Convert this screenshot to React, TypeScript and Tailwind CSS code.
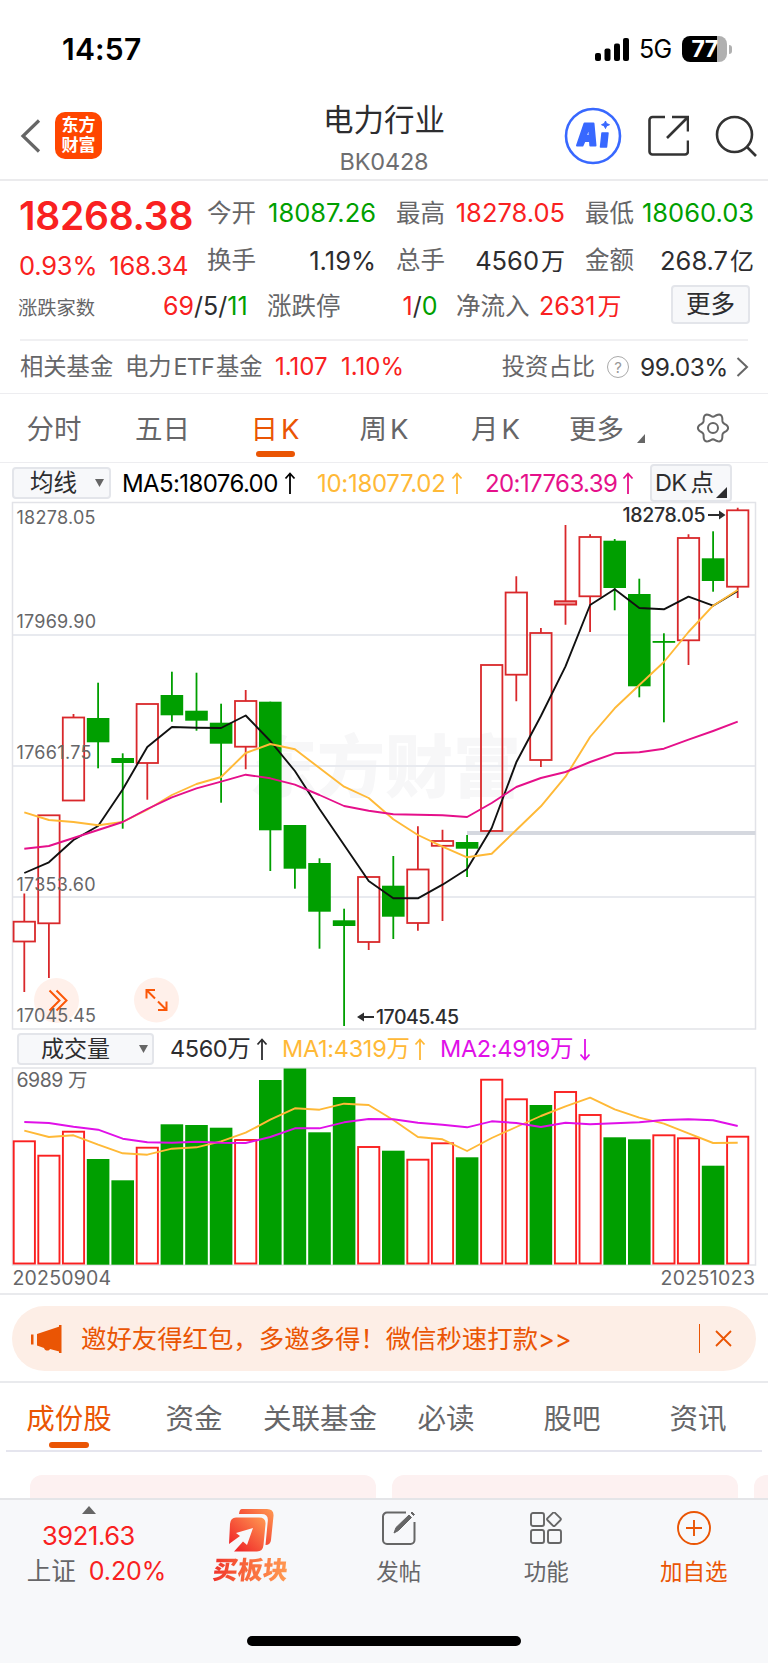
import type { ReactNode } from "react";

type Candle = {
    up: boolean;
    top: number;
    bottom: number;
    high: number;
    low: number;
    vol: number; // y of the volume bar top
};

const RED = "#d9282b";
const GREEN = "#009f00";
const FIRST_X = 24.3;
const STEP = 24.6;

const c = (up: boolean, top: number, bottom: number, high: number, low: number, vol: number): Candle => ({
    up, top, bottom, high, low, vol,
});

const candles: Candle[] = [
    c(true, 921.7, 941.5, 893.5, 992, 1141.3),
    c(true, 815.3, 923.3, 815, 978, 1155.7),
    c(true, 717.5, 800.5, 714, 800, 1131.7),
    c(false, 718, 742.3, 682.7, 768.3, 1159),
    c(false, 758, 763, 753.3, 828.7, 1180.3),
    c(true, 704, 763, 704, 799.7, 1147.7),
    c(false, 695, 715.3, 671.7, 721.7, 1124.3),
    c(false, 710.7, 720.7, 672.7, 730.7, 1125),
    c(false, 722.7, 743.7, 703.7, 802.7, 1127.7),
    c(true, 701, 746.7, 690, 769.3, 1140),
    c(false, 701.7, 830.3, 701.7, 871, 1080),
    c(false, 825, 868.7, 825, 888.7, 1068.5),
    c(false, 863, 911.7, 858.3, 948.7, 1132.3),
    c(false, 920.3, 926, 908.7, 1026, 1097),
    c(true, 877, 942, 877, 950, 1147),
    c(false, 885.7, 916.7, 856, 939, 1150.7),
    c(true, 869.5, 923, 826.3, 930.7, 1159.7),
    c(true, 841, 845.8, 829.7, 921, 1143.3),
    c(false, 842, 848.7, 835, 877, 1157.3),
    c(true, 665, 831, 665, 831, 1079.7),
    c(true, 592.5, 674.7, 576.3, 701.3, 1099.3),
    c(true, 633, 760, 628, 767, 1105),
    c(true, 601.2, 604.6, 525, 624.7, 1092),
    c(true, 537, 596.3, 534.3, 632, 1115),
    c(false, 540.7, 588, 539, 610.3, 1137.3),
    c(false, 594, 686.3, 578.7, 697.3, 1139.3),
    c(false, 641, 642.8, 633.3, 722.3, 1135.3),
    c(true, 538, 640.3, 534.3, 665, 1138.3),
    c(false, 558.3, 581, 531.3, 591.7, 1165.7),
    c(true, 510.3, 586.7, 507.7, 598, 1136.7),
];

// volume colour differs from the candle colour on these days
const volumeFlip = [21, 26];

const ma5 = [873, 862.3, 840, 826, 789.5, 747, 727, 727.7, 728, 715.5, 741, 771, 809, 845, 881, 898.3, 898.3, 884.7, 869, 828, 762.3, 716, 666.3, 605, 589.3, 608, 609.3, 596.7, 605.7, 591];
const ma10 = [812.3, 820, 822, 825.3, 822, 809.7, 795, 784, 777, 753, 744, 749.3, 768, 786.7, 798, 819.3, 835, 846.7, 857.3, 853.7, 830, 806.3, 776.7, 737, 708.3, 685, 662, 632, 605.7, 590];
const ma20 = [848.7, 846, 838, 830, 822, 809, 797.3, 788.3, 781.7, 774.7, 778.3, 784.7, 795, 806, 810.7, 814.3, 814.7, 815.3, 817, 803, 787, 778, 772, 762, 753.3, 752.3, 748.7, 739.7, 731, 721.7];
const volMa1 = [1130.7, 1137, 1135.3, 1144.7, 1153.3, 1154.7, 1148.7, 1147.3, 1141.3, 1132.7, 1119.7, 1108.3, 1109.7, 1103.7, 1105, 1120, 1137, 1139.3, 1151, 1138, 1127, 1116, 1106.3, 1097.7, 1109.3, 1117.7, 1123.7, 1133.3, 1143, 1142.7];
const volMa2 = [1122, 1123, 1126.7, 1129.7, 1138.7, 1142.3, 1142.7, 1141.7, 1142.7, 1143, 1137, 1128.3, 1128.3, 1122.3, 1119, 1119.3, 1122.7, 1124.7, 1127.3, 1121.3, 1123, 1127, 1122.7, 1124.3, 1123.3, 1122.3, 1120, 1119.3, 1120.3, 1126];

const xAt = (i: number) => FIRST_X + i * STEP;
const toPoints = (ys: number[]) => ys.map((y, i) => `${xAt(i).toFixed(1)},${y}`).join(" ");

const gearPath =
    Array.from({ length: 72 }, (_, i) => {
        const a = (i * Math.PI) / 36;
        const r = 13.2 + 1.9 * Math.cos(6 * a);
        return `${i ? "L" : "M"}${(17 + r * Math.cos(a)).toFixed(2)} ${(17 + r * Math.sin(a)).toFixed(2)}`;
    }).join("") + "Z";

export default function App() {
    return (
        <div className="flex h-[1663px] w-[768px] flex-col overflow-hidden bg-white font-['Inter','Noto_Sans_CJK_SC',sans-serif] text-[#2d2d2f]">
            <StatusBar />
            <Header />
            <Quote />
            <PeriodTabs />
            <PriceHeader />
            <PriceChart />
            <VolumeHeader />
            <VolumeChart />
            <Banner />
            <ContentTabs />
            <BottomNav />
        </div>
    );
}

function StatusBar() {
    return (
        <div className="flex h-[92px] shrink-0 items-center justify-between pt-[6px] pr-[36px] pl-[62px] text-black">
            <div className="text-[30px] leading-none font-semibold tracking-[0.2px]">14:57</div>
            <div className="flex items-center">
                <svg width="35" height="23" viewBox="0 0 35 23">
                    <rect x="0" y="15" width="6" height="8" rx="2" />
                    <rect x="9.5" y="10.5" width="6" height="12.5" rx="2" />
                    <rect x="19" y="5.5" width="6" height="17.5" rx="2" />
                    <rect x="28" y="0" width="6" height="23" rx="2" />
                </svg>
                <div className="ml-[9px] w-[34px] text-[25px] leading-none tracking-[-0.8px]">5G</div>
                <div className="ml-[9px] flex h-[26px] w-[45px] items-center justify-center overflow-hidden rounded-[8px] bg-[linear-gradient(90deg,#000_77%,#b0b0b0_77%)] text-[23px] leading-none font-bold tracking-[-0.5px] text-white">
                    77
                </div>
                <div className="ml-[1.5px] h-[9px] w-[3.5px] rounded-r-full bg-[#b0b0b0]" />
            </div>
        </div>
    );
}

function Header() {
    return (
        <div className="grid h-[89px] shrink-0 grid-cols-[1fr_auto_1fr] items-center border-b-2 border-[#ebebed]">
            <div className="flex items-center pl-[20px]">
                <svg width="22" height="36" viewBox="0 0 22 36" fill="none" stroke="#666" strokeWidth="3.2">
                    <path d="M19 2.5 3 18l16 15.500" />
                </svg>
                <div className="ml-[13px] flex h-[47px] w-[47px] flex-col items-center justify-center rounded-[10px] bg-[#ff4600] text-[17px] leading-[19.500px] font-bold text-white">
                    <span>东方</span>
                    <span>财富</span>
                </div>
            </div>
            <div className="flex flex-col items-center pt-[6px]">
                <div className="text-[30.5px] leading-[34px]">电力行业</div>
                <div className="mt-[12px] text-[23.5px] leading-[26px] tracking-[-0.2px] text-[#6e6e70]">BK0428</div>
            </div>
            <div className="flex items-center justify-end pr-[11px]">
                <svg width="58" height="58" viewBox="0 0 58 58">
                    <circle cx="29" cy="29" r="27" fill="#fff" stroke="#3868ff" strokeWidth="2.6" />
                    <g fill="#3868ff" stroke="#3868ff" strokeLinejoin="round">
                        <path strokeWidth="2" fillRule="evenodd" d="M20.500 16.500h9l2 22h-5.200l-.3-4.500h-5.500l-2 4.500h-5.500zM24 22l-2 7h3.600L25.200 22z" />
                        <path strokeWidth="1.500" d="M38 26h6l-1.500 14h-6z" />
                        <path strokeWidth="1" d="M41.500 14l1 2.500 3 1.200-3 1.300-1 2.500-1.200-2.500-2.800-1.300 2.800-1.200z" />
                    </g>
                </svg>
                <svg className="ml-[25.5px]" width="41" height="41" viewBox="0 0 41 41" fill="none" stroke="#333" strokeWidth="2.6">
                    <path d="M17 2H4.500a3 3 0 0 0-3 3v31.500a3 3 0 0 0 3 3H37a3 3 0 0 0 3-3V25.500M24 2h16v14.500M40 2 19 23" />
                </svg>
                <svg className="ml-[26.5px]" width="42" height="42" viewBox="0 0 42 42" fill="none" stroke="#333" strokeWidth="2.6">
                    <circle cx="19.500" cy="19.500" r="17.500" />
                    <path d="M31.500 31.500 41 41" />
                </svg>
            </div>
        </div>
    );
}

function Stat({ label, value, color }: { label: string; value: ReactNode; color: string }) {
    return (
        <div className="flex w-[169px] items-center justify-between text-[24.5px] leading-none whitespace-nowrap">
            <span className="text-[#666668]">{label}</span>
            <span className={`text-[25.500px] ${color}`}>{value}</span>
        </div>
    );
}

function Quote() {
    return (
        <div className="flex h-[213px] shrink-0 flex-col border-b border-[#ededf0]">
            <div className="flex h-[103px] pl-[19px]">
                <div className="flex w-[188px] flex-col text-[#f92121]">
                    <div className="mt-[14px] text-[39px] leading-[42px] font-semibold tracking-[-0.25px]">18268.38</div>
                    <div className="mt-[14px] flex gap-[12px] text-[25.500px] leading-[30px] tracking-[-0.2px]">
                        <span>0.93%</span>
                        <span>168.34</span>
                    </div>
                </div>
                <div className="grid grid-cols-[189px_189px_169px] grid-rows-[48px_47px] items-center pt-[8px]">
                    <Stat label="今开" value="18087.26" color="text-[#009f00]" />
                    <Stat label="最高" value="18278.05" color="text-[#f92121]" />
                    <Stat label="最低" value="18060.03" color="text-[#009f00]" />
                    <Stat label="换手" value="1.19%" color="text-[#2d2d2f]" />
                    <Stat label="总手" value={<>4560<span className="ml-[2px] text-[24px]">万</span></>} color="text-[#2d2d2f]" />
                    <Stat label="金额" value={<>268.7<span className="ml-[2px] text-[24px]">亿</span></>} color="text-[#2d2d2f]" />
                </div>
            </div>
            <div className="flex h-[44px] items-center pl-[18px] text-[25px] leading-none whitespace-nowrap">
                <span className="w-[145px] pt-[6px] text-[19.3px] text-[#666668]">涨跌家数</span>
                <span className="w-[104px]">
                    <b className="font-normal text-[#f92121]">69</b>/5/<b className="font-normal text-[#009f00]">11</b>
                </span>
                <span className="w-[135.5px] text-[24.5px] text-[#666668]">涨跌停</span>
                <span className="w-[53.5px]">
                    <b className="font-normal text-[#f92121]">1</b>/<b className="font-normal text-[#009f00]">0</b>
                </span>
                <span className="w-[83px] text-[24.5px] text-[#666668]">净流入</span>
                <span className="w-[132px] text-[#f92121]">
                    2631<span className="ml-[2px] text-[24px]">万</span>
                </span>
                <button className="h-[39px] w-[79px] -translate-y-[2px] rounded-[4px] border-2 border-[#e3e5ea] bg-[#f7f8fa] text-[24.5px] leading-none">更多</button>
            </div>
            <div className="mx-[20px] mt-[11px] h-[2px] shrink-0 bg-[#f0f0f2]" />
            <div className="flex flex-1 items-center pr-[19px] pl-[20px] text-[23.3px] leading-none whitespace-nowrap text-[#666668]">
                <span className="w-[105px]">相关基金</span>
                <span className="w-[150px]">
                    电力<span className="mx-[2px] tracking-[-0.8px]">ETF</span>基金
                </span>
                <span className="w-[66px] text-[24px] text-[#f92121]">1.107</span>
                <span className="text-[24px] text-[#f92121]">1.10%</span>
                <span className="ml-auto">投资占比</span>
                <span className="ml-[12px] flex h-[22px] w-[22px] items-center justify-center rounded-full border-[1.5px] border-[#aaa] text-[15px] text-[#999]">?</span>
                <span className="ml-[11px] w-[87px] text-[24.5px] tracking-[-0.5px] text-[#2d2d2f]">99.03%</span>
                <svg className="ml-[9px]" width="13" height="20" viewBox="0 0 13 20" fill="none" stroke="#666" strokeWidth="2">
                    <path d="M1.500 1l9.500 9-9.500 9" />
                </svg>
            </div>
        </div>
    );
}

function PeriodTabs() {
    return (
        <div className="flex h-[69px] shrink-0 border-b border-[#ededf0] text-center text-[27.5px] leading-[70px] whitespace-nowrap text-[#666668]">
            <span className="w-[108px]">分时</span>
            <span className="w-[109px]">五日</span>
            <div className="flex w-[116px] flex-col items-center text-[#ea5504]">
                <span className="h-[57px]">
                    日<span className="ml-[3px]">K</span>
                </span>
                <div className="h-[6px] w-[39px] rounded-full bg-[#ea5504]" />
            </div>
            <span className="w-[102px]">
                周<span className="ml-[3px]">K</span>
            </span>
            <span className="w-[121px]">
                月<span className="ml-[3px]">K</span>
            </span>
            <span className="w-[81px]">更多</span>
            <svg className="mt-[40px]" width="8" height="9" viewBox="0 0 8 9">
                <path d="M8 0v9H0z" fill="#666" />
            </svg>
            <svg className="mt-[17px] ml-[51px]" width="34" height="34" viewBox="0 0 34 34" fill="none" stroke="#666" strokeWidth="2">
                <path d={gearPath} />
                <circle cx="17" cy="17" r="5" />
            </svg>
        </div>
    );
}

function PriceHeader() {
    return (
        <div className="flex h-[38px] shrink-0 items-center pt-[2px] pl-[12px] text-[24px] leading-none tracking-[-0.6px] whitespace-nowrap">
            <button className="flex h-[32px] w-[99px] items-center justify-between rounded-[4px] border-2 border-[#e3e5ea] bg-[#f7f8fa] pr-[5px] pl-[16px] text-[23.5px] tracking-normal">
                均线
                <Caret />
            </button>
            <span className="ml-[11px] w-[162px] pt-px text-black">MA5:18076.00</span>
            <Arrow color="#000" />
            <span className="ml-[21px] w-[134px] pt-px tracking-[-0.3px] text-[#ffb937]">10:18077.02</span>
            <Arrow color="#ffb937" />
            <span className="ml-[22px] w-[137px] pt-px tracking-[-0.6px] text-[#e5108a]">20:17763.39</span>
            <Arrow color="#e5108a" />
            <button className="relative mr-[36px] ml-auto h-[38px] w-[82px] rounded-[4px] border-2 border-[#e3e5ea] bg-[#f7f8fa] pl-[3px] text-left text-[23.500px]">
                DK<span className="ml-[4px]">点</span>
                <svg className="absolute right-[3px] bottom-[2px]" width="11" height="11" viewBox="0 0 11 11">
                    <path d="M11 0v11H0z" fill="#2d2d2f" />
                </svg>
            </button>
        </div>
    );
}

function Caret() {
    return (
        <svg width="9" height="8" viewBox="0 0 9 8">
            <path d="M0 0h9L4.500 8z" fill="#666" />
        </svg>
    );
}

function Arrow({ color, down }: { color: string; down?: boolean }) {
    return (
        <svg className={down ? "rotate-180" : ""} width="12" height="23" viewBox="0 0 12 23" fill="none" stroke={color} strokeWidth="1.8">
            <path d="M6 22V2M1.500 6.500 6 1.500l4.500 5" />
        </svg>
    );
}

function PriceChart() {
    return (
        <svg className="block shrink-0" width="768" height="529" viewBox="0 501 768 529">
            <text x="249" y="792" fontSize="68" fontWeight="900" fill="#f7f7f8" textLength="272">东方财富</text>
            <g stroke="#e8eaef" strokeWidth="2">
                <path d="M12 635h743M12 766h743M12 897h743" />
                <path d="M12.500 502.500h743v526.500H12.500z" strokeWidth="1.500" fill="none" stroke="#e2e3e8" />
            </g>
            <path d="M467 833h288.500" stroke="#d5d8df" strokeWidth="4" />

            <g fill="#fff0ea">
                <circle cx="56.500" cy="1000.500" r="22.500" />
                <circle cx="156.500" cy="1000" r="22.500" />
            </g>

            {candles.map((k, i) => {
                const x = xAt(i);
                return k.up ? (
                    <g key={i} stroke={RED} fill="none" strokeWidth="1.8">
                        <path d={`M${x} ${k.high}V${k.top}M${x} ${k.bottom}V${k.low}`} />
                        <rect x={x - 10.7} y={k.top} width="21.4" height={k.bottom - k.top} fill={i === 22 ? "#ee9a9b" : "none"} />
                    </g>
                ) : (
                    <g key={i} fill={GREEN}>
                        <rect x={x - 0.9} y={k.high} width="1.8" height={k.low - k.high} />
                        <rect x={x - 11.3} y={k.top} width="22.6" height={k.bottom - k.top} />
                    </g>
                );
            })}

            <g fill="none" strokeWidth="1.900" strokeLinejoin="round">
                <polyline points={toPoints(ma5)} stroke="#111" />
                <polyline points={toPoints(ma10)} stroke="#ffb937" />
                <polyline points={toPoints(ma20)} stroke="#e5108a" />
            </g>

            <g fontSize="18" fill="#666668">
                <text x="16.500" y="523.500" textLength="79">18278.05</text>
                <text x="16.500" y="627.500" textLength="79.500">17969.90</text>
                <text x="16.500" y="759" textLength="75">17661.75</text>
                <text x="16.500" y="890.500" textLength="79">17353.60</text>
                <text x="16.500" y="1021.500" textLength="79.500">17045.45</text>
            </g>

            <g fontSize="19.500" fontWeight="500" fill="#2d2d2f">
                <text x="622.500" y="522" textLength="83">18278.05</text>
                <text x="376" y="1024" textLength="83">17045.45</text>
            </g>
            <g fill="#2d2d2f">
                <path d="M708 514h11v-3.500l6.500 4.500-6.500 4.500V516h-11z" />
                <path d="M374 1016h-10v-3.500l-7 4.500 7 4.500V1018h10z" />
            </g>

            <g fill="none" stroke="#fb5708" strokeWidth="2">
                <path d="m49.500 990.500 10 10-10 10M56.500 990.500l10 10-10 10" />
                <path d="M146.500 998.500v-8.500h8.500M147 990.500l8 8M166.500 1001.500v8.500H158M166 1009.500l-8-8" />
            </g>
        </svg>
    );
}

function VolumeHeader() {
    return (
        <div className="flex h-[37px] shrink-0 items-center pt-px pl-[17px] text-[23.5px] leading-none tracking-[-0.4px] whitespace-nowrap">
            <button className="flex h-[32px] w-[137px] items-center justify-between rounded-[4px] border-2 border-[#e3e5ea] bg-[#f7f8fa] pr-[4px] pl-[22px] text-[23px] tracking-normal">
                成交量
                <Caret />
            </button>
            <span className="ml-[16px] w-[86px]">4560万</span>
            <Arrow color="#2d2d2f" />
            <span className="ml-[14px] w-[132px] tracking-[-0.3px] text-[#ffb937]">MA1:4319万</span>
            <Arrow color="#ffb937" />
            <span className="ml-[14px] w-[139px] tracking-[-0.3px] text-[#e010e8]">MA2:4919万</span>
            <Arrow color="#e010e8" down />
        </div>
    );
}

function VolumeChart() {
    return (
        <svg className="block shrink-0" width="768" height="226" viewBox="0 1067 768 226">
            <path d="M12.500 1068h743v197h-743z" fill="none" stroke="#e2e3e8" strokeWidth="1.500" />
            <text x="16.500" y="1087" fontSize="19.500" fill="#666668" textLength="71">6989 万</text>
            {candles.map((k, i) => {
                const x = xAt(i);
                const red = volumeFlip.includes(i) ? !k.up : k.up;
                return red ? (
                    <rect key={i} x={x - 10.6} y={k.vol} width="21.200" height={1263.5 - k.vol} fill="none" stroke="#fa2020" strokeWidth="1.900" />
                ) : (
                    <rect key={i} x={x - 11.3} y={k.vol} width="22.600" height={1264.7 - k.vol} fill={GREEN} />
                );
            })}
            <g fill="none" strokeWidth="1.900" strokeLinejoin="round">
                <polyline points={toPoints(volMa1)} stroke="#ffb937" />
                <polyline points={toPoints(volMa2)} stroke="#e010e8" />
            </g>
            <g fontSize="19.500" fill="#666668">
                <text x="12.500" y="1285" textLength="98.500">20250904</text>
                <text x="660.500" y="1285" textLength="94.500">20251023</text>
            </g>
        </svg>
    );
}

function Banner() {
    return (
        <div className="h-[90px] shrink-0 border-y-2 border-[#e9eaed] px-[12px] py-[11px]">
            <div className="flex h-[65px] items-center rounded-full bg-[#fdeee6] pr-[24px] pl-[19px] text-[#ea5504]">
                <svg width="32" height="28" viewBox="0 0 32 28" fill="#ea5504">
                    <path d="M0 9.500h2.500v10H0zM6 9 30 1v26l-11-3c-1 2.200-5 2.200-6-1L6 20.500z" />
                    <path d="M28 0h2.500v28H28z" />
                </svg>
                <span className="ml-[18px] text-[25.4px] leading-none whitespace-nowrap">邀好友得红包，多邀多得！微信秒速打款&gt;&gt;</span>
                <div className="ml-auto h-[29px] w-[1.5px] bg-[#ea5504]" />
                <svg className="ml-[15px]" width="17" height="17" viewBox="0 0 17 17" fill="none" stroke="#ea5504" strokeWidth="1.800">
                    <path d="m1 1 15 15M16 1 1 16" />
                </svg>
            </div>
        </div>
    );
}

function ContentTabs() {
    const tabs = ["资金", "关联基金", "必读", "股吧", "资讯"];
    return (
        <>
            <div className="mx-[6px] grid h-[69px] shrink-0 grid-cols-6 border-b-2 border-[#e5e5ee] text-center text-[28.5px] leading-[72px] whitespace-nowrap text-[#666668]">
                <div className="flex flex-col items-center text-[#ea5504]">
                    <span className="h-[59px]">成份股</span>
                    <div className="h-[6px] w-[40px] rounded-full bg-[#ea5504]" />
                </div>
                {tabs.map((t) => (
                    <span key={t} className="-ml-[2px]">{t}</span>
                ))}
            </div>
            <div className="flex h-[46px] shrink-0 gap-[16px] overflow-hidden pt-[23px] pl-[30px]">
                <div className="h-[60px] w-[346px] shrink-0 rounded-[12px] bg-[#fdf1f1]" />
                <div className="h-[60px] w-[346px] shrink-0 rounded-[12px] bg-[#fdf1f1]" />
                <div className="h-[60px] w-[346px] shrink-0 rounded-[12px] bg-[#fdf1f1]" />
            </div>
        </>
    );
}

function NavItem({ label, className, children }: { label: string; className: string; children: ReactNode }) {
    return (
        <div className={`flex w-[147.5px] flex-col items-center ${className}`}>
            <div className="flex h-[56px] items-center">{children}</div>
            <span className="mt-[2px] text-[22.500px] leading-[28px]">{label}</span>
        </div>
    );
}

function BottomNav() {
    return (
        <div className="flex flex-1 flex-col border-t-2 border-[#e4e5e8] bg-[#f7f8fa]">
            <div className="flex h-[136px]">
                <div className="flex w-[177px] flex-col items-center leading-none">
                    <svg className="mt-[6px]" width="14" height="8" viewBox="0 0 14 8">
                        <path d="M7 0l7 8H0z" fill="#666" />
                    </svg>
                    <span className="mt-[9px] text-[25.500px] tracking-[-0.4px] text-[#f92121]">3921.63</span>
                    <div className="mt-[10px] ml-[16px] flex items-center gap-[13px] text-[24.500px]">
                        <span className="text-[#666668]">上证</span>
                        <span className="text-[25px] tracking-[-0.1px] text-[#f92121]">0.20%</span>
                    </div>
                </div>
                <div className="flex w-[148px] flex-col items-center">
                    <svg className="mt-[9px]" width="47" height="43" viewBox="0 0 47 43">
                        <defs>
                            <linearGradient id="buy" x1="0" y1="1" x2="1" y2="0">
                                <stop offset="0.150" stopColor="#f02a2a" />
                                <stop offset="1" stopColor="#ff9a52" />
                            </linearGradient>
                        </defs>
                        <path d="M14 0h25q7 0 6.500 7l-2.500 24q-.5 5-5.500 5l2.300-24q.7-7-6.300-7H11q.5-5 3-5z" fill="url(#buy)" />
                        <path d="M8 8.500h23q7 0 6.500 6.500l-2 21q-.6 6.500-6.500 6.500H6l9-10 4 3.500 6-17-17 5 4 3-11 8L2 15q.5-6.500 6-6.500z" fill="url(#buy)" />
                    </svg>
                    <span className="mt-[4px] -skew-x-6 bg-linear-to-r from-[#f0302a] to-[#ff9a52] bg-clip-text text-[25px] leading-[28px] font-black text-transparent">
                        买板块
                    </span>
                </div>
                <NavItem label="发帖" className="text-[#666668]">
                    <svg width="34" height="34" viewBox="0 0 34 34" fill="none" stroke="#666" strokeWidth="2">
                        <path d="M24 1.500H5a4 4 0 0 0-4 4V29a4 4 0 0 0 4 4h23.500a4 4 0 0 0 4-4V11" />
                        <path d="m12 22 2-5.500L27 4l2.500 2.500-13 13zM29 2l1-1 2.500 2.500-1 1z" fill="#666" strokeWidth="1" />
                    </svg>
                </NavItem>
                <NavItem label="功能" className="text-[#666668]">
                    <svg width="32" height="32" viewBox="0 0 32 32" fill="none" stroke="#666" strokeWidth="1.900">
                        <rect x="1" y="1" width="13" height="13" rx="2" />
                        <rect x="1" y="18" width="13" height="13" rx="2" />
                        <rect x="18" y="18" width="13" height="13" rx="2" />
                        <rect x="18.700" y="2" width="10.500" height="10.500" rx="1.500" transform="rotate(45 24 7.250)" />
                    </svg>
                </NavItem>
                <NavItem label="加自选" className="text-[#ea5504]">
                    <svg width="34" height="34" viewBox="0 0 34 34" fill="none" stroke="#ea5504" strokeWidth="1.900">
                        <circle cx="17" cy="17" r="16" />
                        <path d="M17 9v16M9 17h16" />
                    </svg>
                </NavItem>
            </div>
            <div className="mx-auto h-[10px] w-[274px] rounded-full bg-black" />
        </div>
    );
}
